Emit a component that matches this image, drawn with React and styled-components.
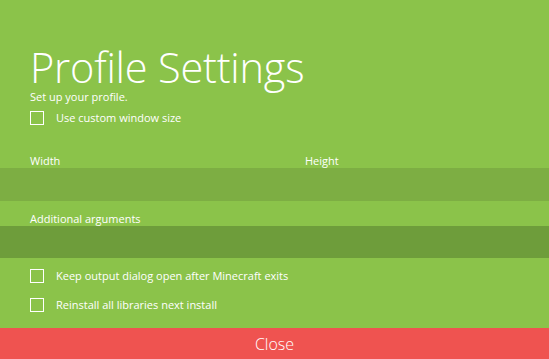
import React from "react";
import styled, { createGlobalStyle } from "styled-components";

const Global = createGlobalStyle`
  html, body {
    margin: 0;
    padding: 0;
    background: #8bc34a;
  }
  body {
    font-family: "Open Sans", "DejaVu Sans", sans-serif;
    color: #fff;
  }
`;

const Page = styled.div`
  display: flex;
  flex-direction: column;
  width: 549px;
  height: 359px;
  background: #8bc34a;
  overflow: hidden;
`;

const Body = styled.div`
  flex: 1;
  display: flex;
  flex-direction: column;
`;

const Header = styled.div`
  padding: 44px 30px 0;
`;

const Title = styled.h1`
  margin: 0;
  font-size: 41.5px;
  font-weight: 300;
  line-height: 46px;
  letter-spacing: -0.2px;
`;

const Subtitle = styled.div`
  font-size: 11px;
  line-height: 14px;
`;

const CheckRow = styled.label`
  display: flex;
  align-items: center;
  gap: 12px;
  padding: 0 30px;
  height: 15px;
  margin-top: ${(p) => p.$top || 0}px;
  font-size: 11px;
  cursor: pointer;
`;

const Box = styled.span`
  width: 12px;
  height: 12px;
  border: 1.5px solid #fff;
  flex-shrink: 0;
`;

const Fields = styled.div`
  display: grid;
  grid-template-columns: ${(p) => (p.$cols === 2 ? "290px 1fr" : "1fr")};
  margin-top: ${(p) => p.$top}px;
`;

const Field = styled.div`
  display: flex;
  flex-direction: column;
`;

const Label = styled.div`
  font-size: 11px;
  line-height: 14px;
  padding-left: ${(p) => p.$pad}px;
  height: 14px;
`;

const Input = styled.input`
  border: none;
  outline: none;
  height: ${(p) => p.$h}px;
  background: ${(p) => p.$bg};
  color: #fff;
  font-family: inherit;
  font-size: 12px;
  padding: 0 30px;
  width: 100%;
  box-sizing: border-box;
`;

const CloseBar = styled.button`
  height: 31px;
  border: none;
  background: #ef5350;
  color: #fff;
  font-family: "Open Sans", sans-serif;
  font-weight: 300;
  font-size: 16px;
  padding: 0;
  cursor: pointer;
`;

const Check = ({ children, top }) => (
  <CheckRow $top={top}>
    <Box />
    {children}
  </CheckRow>
);

export default function App() {
  return (
    <Page>
      <Global />
      <Body>
        <Header>
          <Title>Profile Settings</Title>
          <Subtitle>Set up your profile.</Subtitle>
        </Header>
        <Check top={6}>Use custom window size</Check>
        <Fields $cols={2} $top={29}>
          <Field>
            <Label $pad={30}>Width</Label>
            <Input $h={33} $bg="#7dae43" />
          </Field>
          <Field>
            <Label $pad={15}>Height</Label>
            <Input $h={33} $bg="#7dae43" />
          </Field>
        </Fields>
        <Fields $top={11}>
          <Field>
            <Label $pad={30}>Additional arguments</Label>
            <Input $h={32} $bg="#6e9d3b" />
          </Field>
        </Fields>
        <Check top={10}>Keep output dialog open after Minecraft exits</Check>
        <Check top={14}>Reinstall all libraries next install</Check>
      </Body>
      <CloseBar>Close</CloseBar>
    </Page>
  );
}
